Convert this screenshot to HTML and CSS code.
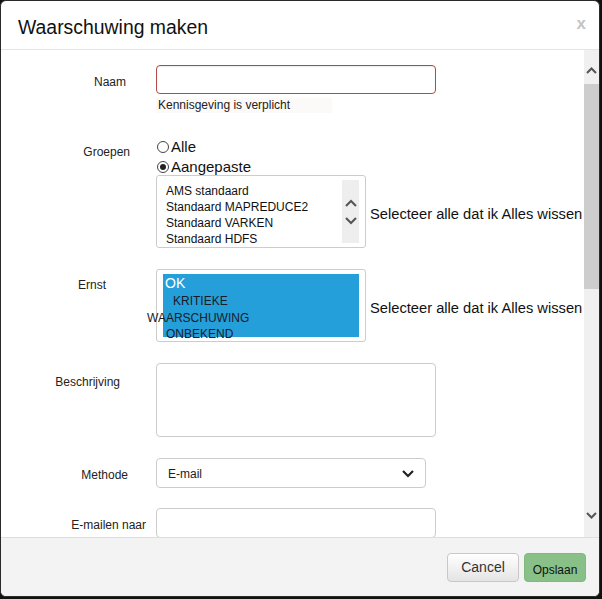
FILE: index.html
```html
<!DOCTYPE html>
<html lang="nl">
<head>
<meta charset="utf-8">
<title>Waarschuwing maken</title>
<link rel="stylesheet" href="styles.css">
</head>
<body>
<div class="dialog">
  <div class="header">
    <h1 class="title">Waarschuwing maken</h1>
    <span class="close">x</span>
  </div>
  <div class="body">
    <div class="content">
      <div class="row row-naam">
        <label class="label">Naam</label>
        <div class="control">
          <input class="input input-error" type="text">
          <div class="error-text">Kennisgeving is verplicht</div>
        </div>
      </div>

      <div class="row row-groepen">
        <label class="label label-groepen">Groepen</label>
        <div class="control">
          <div class="radio"><span class="radio-dot"></span>Alle</div>
          <div class="radio radio-second"><span class="radio-dot checked"></span>Aangepaste</div>
          <div class="list-line">
            <div class="listbox">
              <div class="list-items">
                <div class="item">AMS standaard</div>
                <div class="item">Standaard MAPREDUCE2</div>
                <div class="item">Standaard VARKEN</div>
                <div class="item">Standaard HDFS</div>
              </div>
              <div class="list-scroll">
                <svg width="12" height="8" viewBox="0 0 12 8"><path d="M1 7 L6 2 L11 7" fill="none" stroke="#555" stroke-width="2"/></svg>
                <svg width="12" height="8" viewBox="0 0 12 8"><path d="M1 1 L6 6 L11 1" fill="none" stroke="#555" stroke-width="2"/></svg>
              </div>
            </div>
            <span class="select-all">Selecteer alle dat ik Alles wissen</span>
          </div>
        </div>
      </div>

      <div class="row row-ernst">
        <label class="label label-ernst">Ernst</label>
        <div class="control">
          <div class="list-line">
            <div class="listbox listbox-ernst">
              <div class="sel-area">
                <div class="sev sev-ok">OK</div>
                <div class="sev sev-krit">KRITIEKE</div>
                <div class="sev sev-waar">WAARSCHUWING</div>
                <div class="sev sev-onb">ONBEKEND</div>
              </div>
            </div>
            <span class="select-all">Selecteer alle dat ik Alles wissen</span>
          </div>
        </div>
      </div>

      <div class="row row-besch">
        <label class="label label-besch">Beschrijving</label>
        <div class="control">
          <textarea class="textarea"></textarea>
        </div>
      </div>

      <div class="row row-methode">
        <label class="label label-methode">Methode</label>
        <div class="control">
          <div class="select">
            <span>E-mail</span>
            <svg width="14" height="10" viewBox="0 0 14 10"><path d="M2 2 L7 7 L12 2" fill="none" stroke="#222" stroke-width="2.2"/></svg>
          </div>
        </div>
      </div>

      <div class="row row-email">
        <label class="label label-email">E-mailen naar</label>
        <div class="control">
          <input class="input" type="text">
        </div>
      </div>
      <div class="spacer"></div>
    </div>
    <div class="scrollbar">
      <svg class="sb-arrow" width="15" height="12" viewBox="0 0 15 12"><path d="M3 8 L7.5 3.5 L12 8" fill="none" stroke="#555" stroke-width="2"/></svg>
      <div class="sb-track"><div class="sb-thumb"></div></div>
      <svg class="sb-arrow" width="15" height="12" viewBox="0 0 15 12"><path d="M3 4 L7.5 8.5 L12 4" fill="none" stroke="#555" stroke-width="2"/></svg>
    </div>
  </div>
  <div class="footer">
    <button class="btn btn-cancel">Cancel</button>
    <button class="btn btn-save">Opslaan</button>
  </div>
</div>
</body>
</html>
```
FILE: styles.css
```css
* { box-sizing: border-box; }
html, body { margin: 0; padding: 0; }
body {
  background: #111;
  width: 602px;
  height: 599px;
  overflow: hidden;
  font-family: "Liberation Sans", Arial, sans-serif;
  color: #222;
}
.dialog {
  width: 600px;
  height: 597px;
  background: #fff;
  border: 1px solid #2a2a2a;
  border-radius: 6px;
  display: flex;
  flex-direction: column;
  overflow: hidden;
}
.header {
  height: 49px;
  border-bottom: 1px solid #e5e5e5;
  display: flex;
  align-items: center;
  justify-content: space-between;
  padding: 0 13px 0 17px;
  flex: none;
}
.title {
  margin: 0;
  font-weight: normal;
  font-size: 19.4px;
  color: #111;
  padding-top: 4px;
}
.close {
  font-size: 17px;
  font-weight: bold;
  color: #c4c4c4;
  margin-top: -3px;
}
.body {
  height: 487px;
  flex: none;
  display: flex;
}
.content {
  flex: 1;
  overflow: hidden;
  padding-top: 15px;
}
.spacer { height: 400px; }
.row { display: flex; align-items: flex-start; }
.label {
  width: 155px;
  flex: none;
  text-align: right;
  padding-right: 30px;
  font-size: 12px;
  line-height: 16px;
  color: #222;
  padding-top: 9px;
}
.control { flex: 1; }
.input {
  display: block;
  width: 280px;
  height: 30px;
  border: 1px solid #ccc;
  border-radius: 4px;
  background: #fff;
  margin: 0;
}
.input-error {
  height: 29px;
  border-color: #b24a48;
  box-shadow: inset 0 1px 1px rgba(0,0,0,0.08);
}
.error-text {
  margin-top: 4px;
  width: 176px;
  background: #fcf9f9;
  font-size: 12px;
  line-height: 15px;
  padding-left: 2px;
  color: #222;
}
.row-groepen { margin-top: 25px; }
.label-groepen { padding-top: 6px; padding-right: 26px; }
.radio {
  display: flex;
  align-items: center;
  font-size: 15px;
  line-height: 18px;
  height: 18px;
  color: #111;
}
.radio-second { height: 19px; padding-top: 3px; }
.radio-dot {
  width: 12px;
  height: 12px;
  border: 1px solid #444;
  border-radius: 50%;
  margin: 0 2px 0 1px;
  display: flex;
  align-items: center;
  justify-content: center;
  background: #fff;
}
.radio-dot.checked::after {
  content: "";
  width: 6px;
  height: 6px;
  border-radius: 50%;
  background: #222;
}
.list-line {
  display: flex;
  align-items: center;
  gap: 4px;
}
.listbox {
  width: 210px;
  height: 73px;
  border: 1px solid #ccc;
  border-radius: 3px;
  display: flex;
  flex: none;
  padding: 4px 6px 4px 9px;
}
.list-items { flex: 1; padding-top: 3px; }
.item {
  font-size: 12px;
  line-height: 16px;
  color: #111;
}
.list-scroll {
  width: 17px;
  background: #eeeeee;
  display: flex;
  flex-direction: column;
  align-items: center;
  justify-content: center;
  gap: 10px;
}
.select-all {
  font-size: 14.7px;
  color: #111;
  white-space: nowrap;
  padding-top: 4px;
}
.row-ernst { margin-top: 21px; }
.label-ernst { padding-right: 50px; padding-top: 8px; }
.listbox-ernst { padding: 4px 6px 4px 6px; }
.sel-area {
  flex: 1;
  background: #259fd9;
  padding-top: 1px;
}
.sev {
  font-size: 12px;
  line-height: 17px;
  color: #1a1a2a;
  white-space: nowrap;
}
.sev-ok { color: #fff; font-size: 14px; line-height: 16px; padding-left: 2px; }
.sev-krit { padding-left: 10px; margin-top: 2px; }
.sev-waar { margin-left: -16px; }
.sev-onb { padding-left: 3px; line-height: 14px; }
.row-besch { margin-top: 21px; }
.label-besch { padding-right: 36px; padding-top: 11px; }
.textarea {
  display: block;
  width: 280px;
  height: 74px;
  border: 1px solid #ccc;
  border-radius: 4px;
  resize: none;
  margin: 0;
}
.row-methode { margin-top: 21px; }
.label-methode { padding-right: 28px; padding-top: 9px; }
.select {
  width: 270px;
  height: 30px;
  border: 1px solid #ccc;
  border-radius: 4px;
  display: flex;
  align-items: center;
  justify-content: space-between;
  padding: 2px 10px 0 11px;
  font-size: 12px;
  color: #222;
}
.row-email { margin-top: 20px; }
.label-email { padding-right: 10px; padding-top: 9px; }
.scrollbar {
  width: 15px;
  flex: none;
  background: #f0f0f0;
  display: flex;
  flex-direction: column;
  align-items: center;
  padding-top: 15px;
}
.sb-arrow { flex: none; }
.sb-track { flex: 1; width: 15px; padding-top: 7px; }
.sb-thumb { width: 15px; height: 205px; background: #cdcdcd; }
.scrollbar .sb-arrow:last-child { margin-bottom: 16px; }
.footer {
  flex: 1;
  background: #f3f3f3;
  border-top: 1px solid #dedede;
  display: flex;
  justify-content: flex-end;
  align-items: flex-start;
  gap: 5px;
  padding: 15px 13px 0 0;
}
.btn {
  height: 29px;
  border-radius: 4px;
  font-family: "Liberation Sans", Arial, sans-serif;
  margin: 0;
  padding: 0;
}
.btn-cancel {
  width: 72px;
  border: 1px solid #c8c8c8;
  background: linear-gradient(#ffffff, #e4e4e4);
  font-size: 14px;
  color: #333;
  padding-bottom: 2px;
}
.btn-save {
  width: 62px;
  border: 1px solid #80b880;
  background: #88c088;
  font-size: 12px;
  color: #111;
  padding-top: 4px;
}
```
